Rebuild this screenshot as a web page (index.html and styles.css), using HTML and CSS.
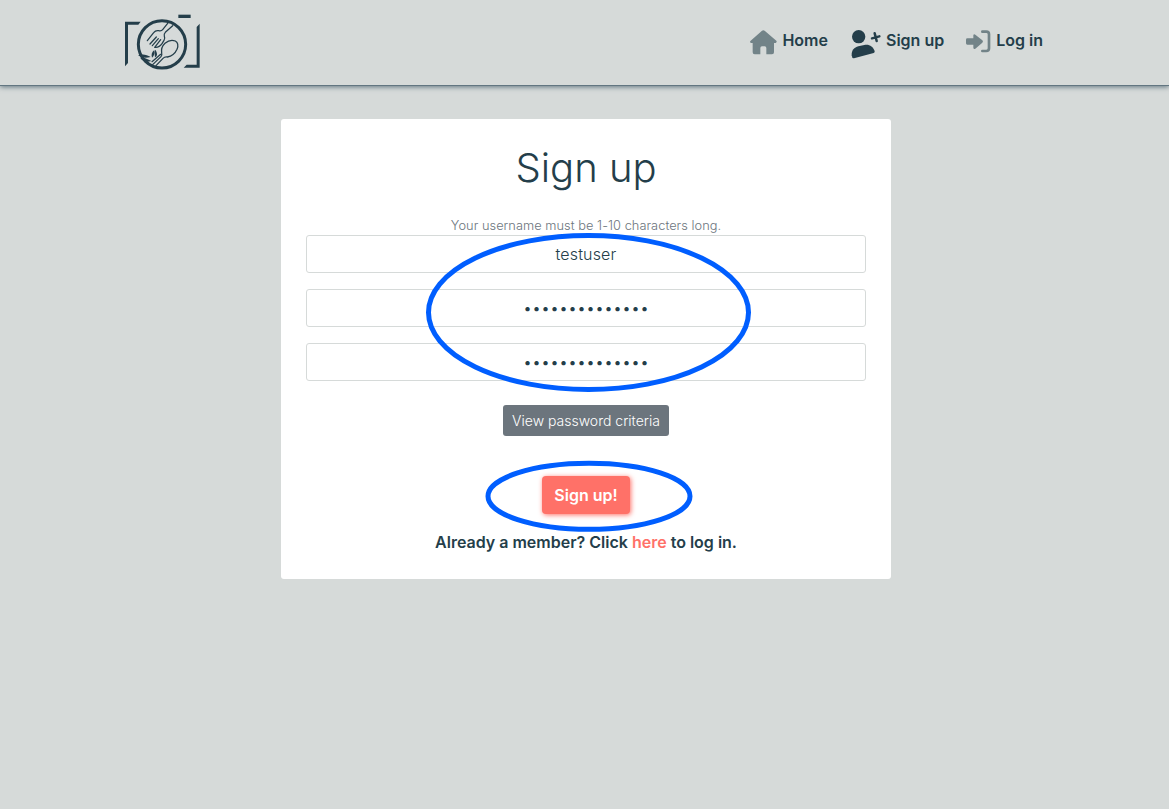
FILE: index.html
```html
<!DOCTYPE html>
<html lang="en">
<head>
<meta charset="utf-8">
<title>Sign up</title>
<link rel="stylesheet" href="styles.css">
</head>
<body>
<header class="navbar">
  <a class="logo" href="#" aria-label="Home">
    <svg width="77" height="57" viewBox="27 27 231 171" fill="none" stroke="#243e4a" stroke-width="3.8" stroke-linecap="round" stroke-linejoin="round">
      <g fill="#243e4a" stroke="none">
        <path d="M30 50H77L70 59H39V174L30 184Z"/>
        <path d="M190 29H227V39H190Z"/>
        <path d="M254 56V188H206L215 179H245V66Z"/>
        <path d="M69 151C82 146 95 148 107 156C91 161 80 158 69 151ZM76 159C88 157 96 162 109 168C95 173 84 170 76 159ZM111 158C108 148 111 140 118 135C119 146 118 153 111 158ZM120 157C119 147 118 140 121 134C128 145 128 153 120 157Z"/>
      </g>
      <circle cx="141" cy="118" r="71" stroke-width="9"/>
      <path d="M158 55L143 74Q139 79 131 77Q122 75 116 83L97 107M124 96L105 117M130 101L112 122M137 104L119 127Q132 129 141 116L147 106Q151 100 148 94Q146 87 151 82L173 62"/>
      <path d="M113 179L138 155Q142 151 140 145Q137 127 150 115Q165 102 181 108Q193 115 186 133Q177 153 157 156Q149 155 144 160L123 182M111 170L137 148"/>
    </svg>
  </a>
  <nav class="nav">
    <a class="nav-link home" href="#">
      <svg width="27" height="25" viewBox="30 44 81 75" fill="#728388"><path d="M66 46Q70 43 74 46L109 76Q112 80 107 83H102V111Q102 117 96 117H79V98Q79 93 74 93H66Q61 93 61 98V117H44Q38 117 38 111V83H33Q28 80 32 76Z"/></svg>
      <span>Home</span>
    </a>
    <a class="nav-link signup" href="#">
      <svg width="30" height="30" viewBox="332 42 90 90" fill="#243e4a"><circle cx="355" cy="65" r="20"/><path d="M334 121C333 106 342 97 354 94L372 90C387 87 398 95 403 108Q404 112 400 114L341 130Q335 131 334 121Z"/><path d="M403 55L409 78M395 70L417 64" stroke="#243e4a" stroke-width="7.5" stroke-linecap="round"/></svg>
      <span>Sign up</span>
    </a>
    <a class="nav-link login" href="#">
      <svg width="25" height="23" viewBox="228 46 75 69" fill="#728388"><path d="M232 71H250V62Q251 57 256 60L277 77Q281 80 277 84L256 102Q251 105 250 99V90H232Q228 90 228 86V75Q228 71 232 71Z"/><path d="M277 51H289Q297 51 297 59V101Q297 109 289 109H277" fill="none" stroke="#728388" stroke-width="8" stroke-linecap="round"/></svg>
      <span>Log in</span>
    </a>
  </nav>
</header>
<main class="card">
  <h1 class="title">Sign up</h1>
  <form class="form">
    <small class="hint">Your username must be 1-10 characters long.</small>
    <input class="field username" type="text" value="testuser" aria-label="Username">
    <input class="field" type="password" value="samplepassword" aria-label="Password">
    <input class="field" type="password" value="samplepassword" aria-label="Confirm password">
    <button class="criteria" type="button">View password criteria</button>
    <button class="submit" type="button">Sign up!</button>
  </form>
  <p class="member">Already a member? Click <a class="member-link" href="#">here</a> to log in.</p>
  <svg class="mark mark-fields" width="326" height="160" viewBox="0 0 326 160"><ellipse cx="162.5" cy="79.5" rx="160" ry="77"/></svg>
  <svg class="mark mark-submit" width="208" height="72" viewBox="0 0 208 72"><ellipse cx="104" cy="36.3" rx="101" ry="33"/></svg>
</main>
</body>
</html>
```
FILE: styles.css
```css
* { box-sizing: border-box; }
body {
  margin: 0;
  min-height: 100vh;
  background: #d6dad9;
  color: #243e4a;
  font: 300 16px/24px Inter, sans-serif;
}
a { color: inherit; text-decoration: none; }
svg { display: block; flex: none; }
.navbar {
  height: 86px;
  padding: 0 126px 0 124px;
  display: flex;
  justify-content: space-between;
  align-items: flex-start;
  border-bottom: 1px solid #627681;
  box-shadow: 0 1px 5px #627681;
}
.logo { padding-top: 14px; }
.nav { display: flex; padding-top: 28px; }
.nav-link { display: flex; font-weight: 600; }
.home svg { margin: 2px 5px 0 0; }
.signup { margin-left: 23px; }
.signup svg { margin: 1px 5px 0 0; }
.login { margin-left: 22px; }
.login svg { margin: 2px 5px 0 0; }
.card {
  position: relative;
  width: 610px;
  height: 460px;
  margin: 33px 0 0 281px;
  padding: 25px;
  background: #fff;
  border-radius: 3px;
  text-align: center;
}
.title { margin: 0; font-size: 40px; font-weight: 300; line-height: 48px; }
.form { display: flex; flex-direction: column; align-items: center; padding-top: 25px; }
.hint { font-size: 12.8px; line-height: 18px; color: #6c757d; letter-spacing: 0.04px; }
.field {
  width: 560px;
  height: 38px;
  margin-bottom: 16px;
  padding: 6px 12px;
  border: 1px solid #d6dad9;
  border-radius: 3px;
  background: #fff;
  color: inherit;
  font: inherit;
  text-align: center;
}
.username { letter-spacing: 0.15px; }
.criteria {
  width: 166px;
  height: 31px;
  margin-top: 8px;
  padding: 0;
  border: 0;
  border-radius: 3px;
  background: #6c757d;
  color: #fff;
  font: 300 14px/21px Inter, sans-serif;
}
.submit {
  width: 88px;
  height: 38px;
  margin-top: 40px;
  padding: 0;
  border: 0;
  border-radius: 4px;
  background: #ff7168;
  box-shadow: 1px 1px 5px #ff7168;
  color: #fff;
  font: 600 16px/24px Inter, sans-serif;
}
.member { margin: 16px 0 0; font-weight: 600; }
.member-link { color: #ff7168; }
.mark { position: absolute; fill: none; stroke: #005eff; stroke-width: 5; pointer-events: none; }
.mark-fields { left: 145px; top: 114px; }
.mark-submit { left: 204px; top: 341px; }
```
